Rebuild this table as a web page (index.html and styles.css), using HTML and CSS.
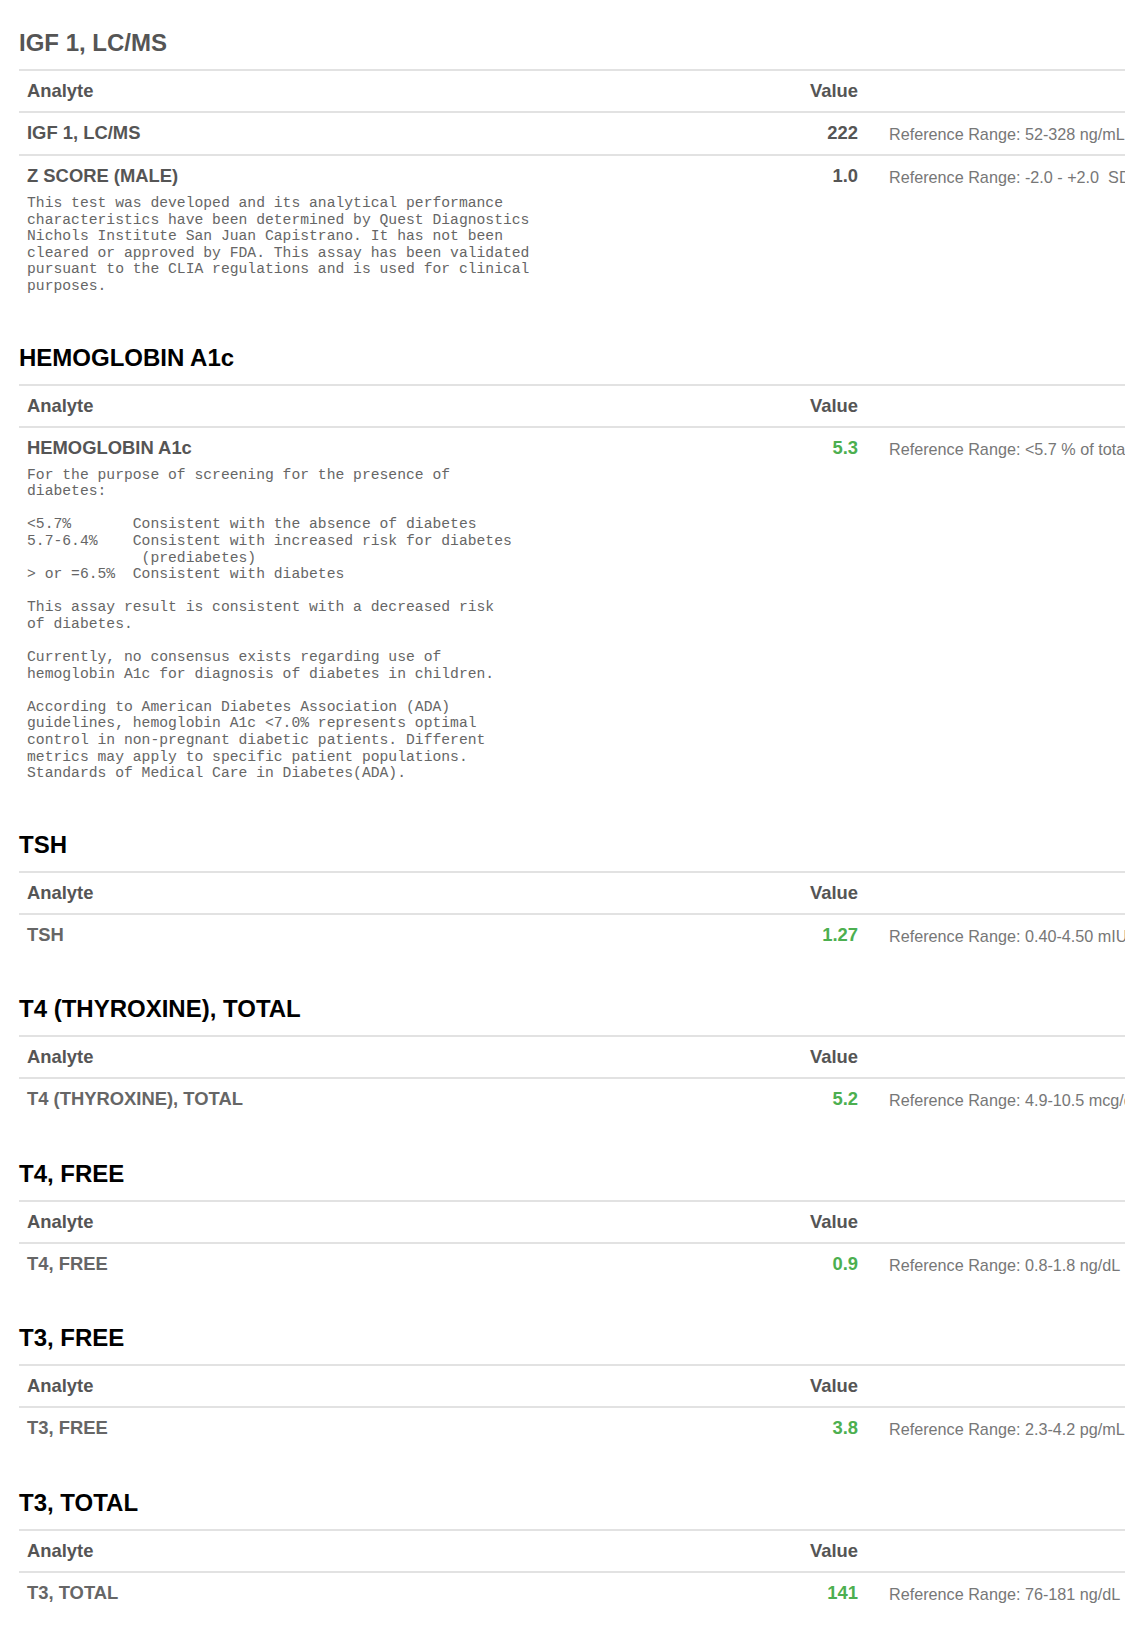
FILE: index.html
```html
<!DOCTYPE html>
<html lang="en">

<head>
    <meta charset="UTF-8">
    <meta name="viewport" content="width=device-width, initial-scale=1.0">
    <title>Lab Results</title>
    <link rel="stylesheet" href="styles.css">
</head>

<body>
    <div class="report">

        <!-- IGF 1 -->
        <section class="teste">
            <h2 class="titulo apagado">IGF 1, LC/MS</h2>
            <table>
                <colgroup>
                    <col class="col_analito">
                    <col class="col_valor">
                    <col>
                </colgroup>
                <tr>
                    <th>Analyte</th>
                    <th class="valor">Value</th>
                    <th></th>
                </tr>
                <tr>
                    <td>IGF 1, LC/MS</td>
                    <td class="valor">222</td>
                    <td class="faixa">Reference Range: 52-328 ng/mL</td>
                </tr>
                <tr>
                    <td class="com_nota">Z SCORE (MALE)
<pre class="nota">This test was developed and its analytical performance
characteristics have been determined by Quest Diagnostics
Nichols Institute San Juan Capistrano. It has not been
cleared or approved by FDA. This assay has been validated
pursuant to the CLIA regulations and is used for clinical
purposes.</pre>
                    </td>
                    <td class="valor">1.0</td>
                    <td class="faixa">Reference Range: -2.0 - +2.0&nbsp; SD</td>
                </tr>
            </table>
        </section>

        <!-- HEMOGLOBIN -->
        <section class="teste">
            <h2 class="titulo">HEMOGLOBIN A1c</h2>
            <table>
                <colgroup>
                    <col class="col_analito">
                    <col class="col_valor">
                    <col>
                </colgroup>
                <tr>
                    <th>Analyte</th>
                    <th class="valor">Value</th>
                    <th></th>
                </tr>
                <tr>
                    <td class="com_nota">HEMOGLOBIN A1c
<pre class="nota">For the purpose of screening for the presence of
diabetes:

&lt;5.7%       Consistent with the absence of diabetes
5.7-6.4%    Consistent with increased risk for diabetes
             (prediabetes)
&gt; or =6.5%  Consistent with diabetes

This assay result is consistent with a decreased risk
of diabetes.

Currently, no consensus exists regarding use of
hemoglobin A1c for diagnosis of diabetes in children.

According to American Diabetes Association (ADA)
guidelines, hemoglobin A1c &lt;7.0% represents optimal
control in non-pregnant diabetic patients. Different
metrics may apply to specific patient populations.
Standards of Medical Care in Diabetes(ADA).</pre>
                    </td>
                    <td class="valor normal">5.3</td>
                    <td class="faixa">Reference Range: &lt;5.7 % of total Hgb</td>
                </tr>
            </table>
        </section>

        <!-- TSH -->
        <section class="teste">
            <h2 class="titulo">TSH</h2>
            <table>
                <colgroup>
                    <col class="col_analito">
                    <col class="col_valor">
                    <col>
                </colgroup>
                <tr>
                    <th>Analyte</th>
                    <th class="valor">Value</th>
                    <th></th>
                </tr>
                <tr>
                    <td class="claro">TSH</td>
                    <td class="valor normal">1.27</td>
                    <td class="faixa">Reference Range: 0.40-4.50 mIU/L</td>
                </tr>
            </table>
        </section>

        <!-- T4 TOTAL -->
        <section class="teste">
            <h2 class="titulo">T4 (THYROXINE), TOTAL</h2>
            <table>
                <colgroup>
                    <col class="col_analito">
                    <col class="col_valor">
                    <col>
                </colgroup>
                <tr>
                    <th>Analyte</th>
                    <th class="valor">Value</th>
                    <th></th>
                </tr>
                <tr>
                    <td class="claro">T4 (THYROXINE), TOTAL</td>
                    <td class="valor normal">5.2</td>
                    <td class="faixa">Reference Range: 4.9-10.5 mcg/dL</td>
                </tr>
            </table>
        </section>

        <!-- T4 FREE -->
        <section class="teste">
            <h2 class="titulo">T4, FREE</h2>
            <table>
                <colgroup>
                    <col class="col_analito">
                    <col class="col_valor">
                    <col>
                </colgroup>
                <tr>
                    <th>Analyte</th>
                    <th class="valor">Value</th>
                    <th></th>
                </tr>
                <tr>
                    <td class="claro">T4, FREE</td>
                    <td class="valor normal">0.9</td>
                    <td class="faixa">Reference Range: 0.8-1.8 ng/dL</td>
                </tr>
            </table>
        </section>

        <!-- T3 FREE -->
        <section class="teste">
            <h2 class="titulo">T3, FREE</h2>
            <table>
                <colgroup>
                    <col class="col_analito">
                    <col class="col_valor">
                    <col>
                </colgroup>
                <tr>
                    <th>Analyte</th>
                    <th class="valor">Value</th>
                    <th></th>
                </tr>
                <tr>
                    <td class="claro">T3, FREE</td>
                    <td class="valor normal">3.8</td>
                    <td class="faixa">Reference Range: 2.3-4.2 pg/mL</td>
                </tr>
            </table>
        </section>

        <!-- T3 TOTAL -->
        <section class="teste">
            <h2 class="titulo">T3, TOTAL</h2>
            <table>
                <colgroup>
                    <col class="col_analito">
                    <col class="col_valor">
                    <col>
                </colgroup>
                <tr>
                    <th>Analyte</th>
                    <th class="valor">Value</th>
                    <th></th>
                </tr>
                <tr>
                    <td class="claro">T3, TOTAL</td>
                    <td class="valor normal">141</td>
                    <td class="faixa">Reference Range: 76-181 ng/dL</td>
                </tr>
            </table>
        </section>

    </div>
</body>

</html>
```

FILE: styles.css
```css
* {
    margin: 0;
    padding: 0;
    box-sizing: border-box;
}

body {
    font-family: "Liberation Sans", Arial, sans-serif;
    background: #fff;
    color: #555;
}

.report {
    overflow: hidden;
    padding-left: 19px;
    padding-top: 30px;
}

.teste {
    margin-bottom: 40.5px;
}

.titulo {
    font-size: 24px;
    line-height: 26px;
    font-weight: bold;
    color: #000;
    margin-bottom: 13px;
}

.titulo.apagado {
    color: #555;
}

table {
    border-collapse: collapse;
    table-layout: fixed;
    width: 1300px;
}

.col_analito {
    width: 747px;
}

.col_valor {
    width: 100px;
}

th,
td {
    border-top: 2px solid #e2e2e2;
    font-size: 18.4px;
    line-height: 20px;
    font-weight: bold;
    text-align: left;
    vertical-align: top;
    padding: 10px 8px;
    color: #555;
    white-space: nowrap;
}

.claro {
    color: #666;
}

.valor {
    text-align: right;
    padding-right: 8px;
}

.normal {
    color: #4caf50;
}

.faixa {
    font-size: 16.2px;
    font-weight: normal;
    color: #777;
    padding-left: 23px;
    padding-top: 11px;
}

.com_nota {
    padding-bottom: 9.5px;
}

.nota {
    font-family: "Liberation Mono", "Courier New", monospace;
    font-size: 14.7px;
    line-height: 16.6px;
    font-weight: normal;
    color: #666;
    margin-top: 9px;
}
```
